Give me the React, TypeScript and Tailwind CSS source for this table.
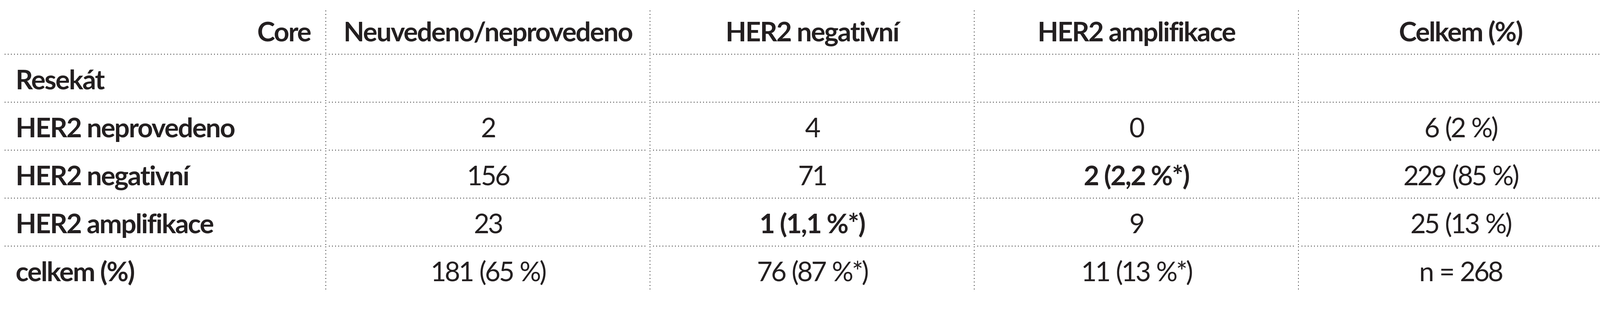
const font = { fontFamily: 'Lato, "Noto Sans", sans-serif' };

type Cell = { text: string; bold?: boolean };

const header = ['Core', 'Neuvedeno/neprovedeno', 'HER2 negativní', 'HER2 amplifikace', 'Celkem (%)'];

const rows: { label: string; cells: Cell[] }[] = [
    { label: 'Resekát', cells: [{ text: '' }, { text: '' }, { text: '' }, { text: '' }] },
    {
        label: 'HER2 neprovedeno',
        cells: [{ text: '2' }, { text: '4' }, { text: '0' }, { text: '6 (2 %)' }],
    },
    {
        label: 'HER2 negativní',
        cells: [{ text: '156' }, { text: '71' }, { text: '2 (2,2 %*)', bold: true }, { text: '229 (85 %)' }],
    },
    {
        label: 'HER2 amplifikace',
        cells: [{ text: '23' }, { text: '1 (1,1 %*)', bold: true }, { text: '9' }, { text: '25 (13 %)' }],
    },
    {
        label: 'celkem (%)',
        cells: [{ text: '181 (65 %)' }, { text: '76 (87 %*)' }, { text: '11 (13 %*)' }, { text: 'n = 268' }],
    },
];

function VLine({ first, last }: { first?: boolean; last?: boolean }) {
    return (
        <div
            className={`w-[2px] shrink-0 bg-[linear-gradient(to_bottom,#262626_2px,transparent_2px)] bg-[length:2px_9px] ${first ? 'mt-[10px]' : ''} ${last ? 'mb-[12px]' : ''}`}
        />
    );
}

function CellBox({
    children,
    align,
    bold,
    line = true,
}: {
    children: React.ReactNode;
    align: 'left' | 'right' | 'center';
    bold?: boolean;
    line?: boolean;
}) {
    const justify =
        align === 'left' ? 'justify-start pl-[35px]' : align === 'right' ? 'justify-end pr-[38px]' : 'justify-center';
    return (
        <div className="flex w-[828px] shrink-0 flex-col">
            <div
                className={`flex flex-1 items-center pt-[4px] text-[69px] leading-none whitespace-nowrap text-[#231f20] [font-variant-ligatures:none] ${justify} ${bold ? 'font-bold tracking-[-0.035em]' : 'font-normal tracking-[-0.06em] [word-spacing:0.05em]'}`}
            >
                {children}
            </div>
            <div
                className={`mx-[7px] h-[2px] ${line ? 'bg-[linear-gradient(to_right,#262626_2px,transparent_2px)] bg-[length:8px_2px]' : ''}`}
            />
        </div>
    );
}

export default function App() {
    return (
        <div className="min-h-[800px] bg-white pt-[17px] pl-[5px]" style={font}>
            <div className="flex w-[4150px] flex-col">
                <div className="flex h-[123px]">
                    {header.map((h, i) => (
                        <div key={h} className="flex">
                            {i > 0 && <VLine first />}
                            <CellBox align={i === 0 ? 'right' : 'center'} bold>
                                {h}
                            </CellBox>
                        </div>
                    ))}
                </div>
                {rows.map((row, r) => {
                    const last = r === rows.length - 1;
                    return (
                        <div key={row.label} className="flex h-[123px]">
                            <CellBox align="left" bold line={!last}>
                                {row.label}
                            </CellBox>
                            {row.cells.map((c, i) => (
                                <div key={i} className="flex">
                                    <VLine last={last} />
                                    <CellBox align="center" bold={c.bold} line={!last}>
                                        {c.text}
                                    </CellBox>
                                </div>
                            ))}
                        </div>
                    );
                })}
            </div>
        </div>
    );
}
